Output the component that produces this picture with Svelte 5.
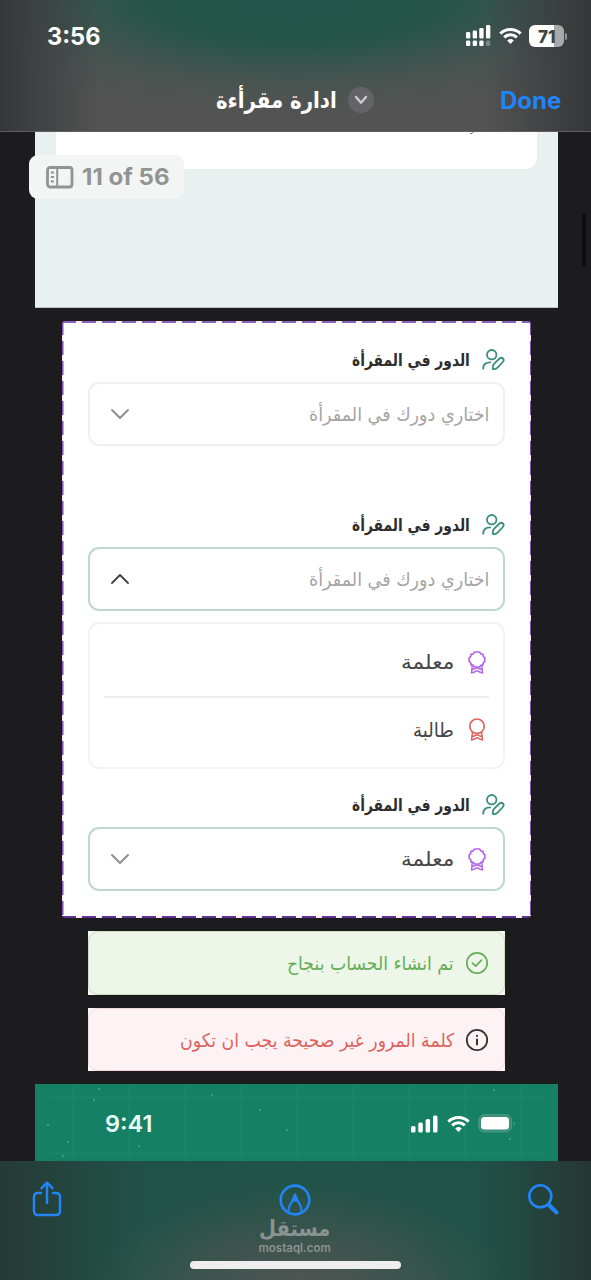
<script>
  // Scales a line of text horizontally so that it fills the given width.
  function fit(node, width) {
    const natural = node.offsetWidth;
    if (natural) node.style.transform = `scaleX(${width / natural})`;
  }
  const stars = [[64,5],[59,16],[177,11],[225,26],[252,46],[13,41],[33,58],[104,62],[28,72],[459,6],[475,55]];
</script>

{#snippet line(text, width, cls)}
  <span class="line {cls}" style="width:{width}px"><span use:fit={width}>{text}</span></span>
{/snippet}

{#snippet wifi(w)}
  <svg width={w} height={w * 0.76} viewBox="0 0 25 19" fill="none" stroke="#fff" stroke-width="3.3">
    <path d="M1.5 7.2a15.8 15.8 0 0 1 22 0" /><path d="M5.6 11.3a10 10 0 0 1 13.8 0" />
    <path d="M12.5 18.4l-3.6-3.7a5.4 5.4 0 0 1 7.2 0z" fill="#fff" stroke="none" />
  </svg>
{/snippet}

{#snippet label()}
  <div class="label">
    <svg width="23" height="22" viewBox="0 0 23 22" fill="none" stroke="#3c9078" stroke-width="1.8" stroke-linecap="round" stroke-linejoin="round">
      <circle cx="9.700" cy="5.700" r="4.700" />
      <path d="M1.200 19.700c0-4 2.400-6.400 7-6.400" />
      <path d="M10.800 20.200q-.5-3.600 1.400-5.500l5.300-5.200c1.100-1 2.500-.9 3.400 0s.9 2.400-.1 3.500l-5 5.300q-1.800 2-5 1.900z" />
    </svg>
    {@render line('الدور في المقرأة', 118, 'bold')}
  </div>
{/snippet}

{#snippet chevron(up)}
  <svg class="chevron" class:up width="20" height="12" viewBox="0 0 20 12" fill="none" stroke={up ? '#444' : '#8c8c8c'} stroke-width="1.9" stroke-linecap="round" stroke-linejoin="round"><path d="M2 2l8 8 8-8" /></svg>
{/snippet}

{#snippet award(color, scalloped)}
  <svg class="award" width="18" height="23" viewBox="0 0 18 23" fill="none" stroke={color} stroke-width="1.700" stroke-linejoin="round" stroke-linecap="round">
    {#if scalloped}
      <path d="M6.500 1h5l1.300 1.800 2.200.5.300 2.200 1.500 1.300v3.600l-1.500 1.300-.3 2.200-2.200.5L11.500 16h-5l-1.300-1.600-2.200-.5-.3-2.200-1.500-1.300V6.800l1.500-1.300.3-2.200 2.200-.5z" />
      <path d="M4.200 15L3.500 22l2.900-1 2.600-1.300 2.600 1.300 2.900 1-.7-7M4.500 18.500L9 16.800l4.500 1.700" stroke-width="1.500" />
    {:else}
      <circle cx="9" cy="8.200" r="7.200" />
      <path d="M4.400 14.300L3.500 22l2.900-1 2.600-1.300 2.600 1.300 2.900 1-.9-7.700M4.500 18.500L9 16.800l4.500 1.700" stroke-width="1.500" />
    {/if}
  </svg>
{/snippet}

<div class="screen">
  <header>
    <div class="status">
      <span class="time">{@render line('3:56', 53, 'latin')}</span>
      <div class="signals">
        <svg width="25" height="22" viewBox="0 0 25 22" fill="#fff">
          <rect x="0" y="7" width="4.3" height="6.5" rx="1.3" /><rect x="6.7" y="5.5" width="4.3" height="8" rx="1.3" /><rect x="13.3" y="3" width="4.3" height="10.5" rx="1.3" /><rect x="20" y="0" width="4.3" height="13.5" rx="1.3" />
          <rect x="0" y="15.5" width="4.3" height="5.5" rx="1.3" /><rect x="6.7" y="15.5" width="4.3" height="5.5" rx="1.3" /><rect x="13.3" y="15.5" width="4.3" height="5.5" rx="1.3" /><rect x="20" y="15.5" width="4.3" height="5.5" rx="1.3" opacity=".3" />
        </svg>
        {@render wifi(23)}
        <div class="battery">{@render line('71', 18, 'latin')}</div><i class="nub"></i>
      </div>
    </div>
    <div class="titlebar">
      <div class="title" dir="rtl">
        {@render line('ادارة مقرأءة', 121, 'heading')}
      </div>
      <span class="disc"><svg width="14" height="10" viewBox="0 0 14 10" fill="none" stroke="#ccc" stroke-width="2.4" stroke-linecap="round" stroke-linejoin="round"><path d="M2 2l5 5.700L12 2" /></svg></span>
      <span class="done">{@render line('Done', 61, 'latin')}</span>
    </div>
  </header>

  <main>
    <section class="previous">
      <div class="sheet"><svg width="6" height="4" viewBox="0 0 6 4" fill="none" stroke="#777"><path d="M1 1.500q2.500.5 3.500-1.500" /></svg></div>
      <div class="counter">
        <svg width="28" height="23" viewBox="0 0 28 23" fill="none" stroke="#929493" stroke-width="2.8"><rect x="1.5" y="1.5" width="24.5" height="19.5" rx="2.5" /><path d="M11.2 2v19" stroke-width="2" /><path d="M4.8 6.500h3.200M4.800 11h3.200M4.800 15.500h3.200" stroke-width="2" /></svg>
        {@render line('11 of 56', 88, 'latin')}
      </div>
    </section>

    <section class="form" dir="rtl">
      {@render label()}
      <div class="select">{@render line('اختاري دورك في المقرأة', 180, 'hint')}{@render chevron(false)}</div>
      <div class="gap"></div>
      {@render label()}
      <div class="select active">{@render line('اختاري دورك في المقرأة', 180, 'hint')}{@render chevron(true)}</div>
      <div class="options">
        <div class="option">{@render award('#b568e8', true)}{@render line('معلمة', 53, 'value')}</div>
        <div class="option">{@render award('#dc6562', false)}{@render line('طالبة', 41, 'value')}</div>
      </div>
      {@render label()}
      <div class="select active">{@render award('#b568e8', true)}{@render line('معلمة', 53, 'value')}{@render chevron(false)}</div>
    </section>

    <div class="toast success" dir="rtl"><div>
      <svg width="24" height="24" viewBox="0 0 24 24" fill="none" stroke="#66ad58" stroke-width="1.7" stroke-linecap="round" stroke-linejoin="round"><circle cx="12" cy="12" r="10.200" /><path d="M7.500 12.200l3.100 3 5.900-6" /></svg>
      {@render line('تم انشاء الحساب بنجاح', 167, '')}
    </div></div>
    <div class="toast error" dir="rtl"><div>
      <svg width="24" height="24" viewBox="0 0 24 24" fill="none" stroke="#333" stroke-width="1.8" stroke-linecap="round"><circle cx="12" cy="12" r="10.200" /><path d="M12 11.500v5M12 7.800v.2" stroke-width="2" /></svg>
      {@render line('كلمة المرور غير صحيحة يجب ان تكون', 274, '')}
    </div></div>

    <section class="next">
      <svg class="pattern" width="523" height="77" fill="none" stroke="#2b8b71" stroke-width="1"><path d="M38.500 0v77M94.500 0v77M150.500 0v77M206.500 0v77M262.500 0v77M318.500 0v77M374.500 0v77M430.500 0v77M486.500 0v77M14 13.500h496M14 69.500h496" opacity=".5" />{#each stars as [x, y]}<circle cx={x} cy={y} r="1" fill="#56a58c" stroke="none" />{/each}</svg>
      <span class="clock">{@render line('9:41', 47, 'latin')}</span>
      <div class="next-signals">
        <svg width="28" height="18" fill="#fff"><rect x="0" y="11" width="4.500" height="6.500" rx="1.500" /><rect x="7.300" y="7.500" width="4.500" height="10" rx="1.500" /><rect x="14.600" y="4" width="4.500" height="13.500" rx="1.500" /><rect x="22" y="0.500" width="4.500" height="17" rx="1.500" /></svg>
        {@render wifi(23)}
        <svg width="39" height="19" viewBox="0 0 39 19"><rect x=".8" y=".8" width="32.500" height="17" rx="5" fill="#398f78" stroke="#4f9d87" stroke-width="1" /><rect x="3" y="3" width="28" height="12.500" rx="3.500" fill="#fff" /><path d="M35.500 7v5q3-2.500 0-5" fill="#4d9d87" /></svg>
      </div>
    </section>
    <i class="scroll"></i>
  </main>

  <footer>
    <svg width="30" height="38" viewBox="0 0 30 38" fill="none" stroke="#2384f5" stroke-width="2.500" stroke-linecap="round" stroke-linejoin="round"><path d="M9 13H6.200Q2 13 2 17v14q0 4 4.200 4h17.600q4.200 0 4.200-4V17q0-4-4.200-4H21M15 23V3M9.500 8.200L15 2.700l5.500 5.500" /></svg>
    <div class="center">
      <svg width="32" height="32" viewBox="0 0 32 32" fill="none" stroke="#2384f5" stroke-width="2.700" stroke-linejoin="round"><circle cx="16" cy="16" r="14.300" /><path d="M9.300 28.500q.5-7 3.400-10.500L16 10.500l3.300 7.500q2.900 3.500 3.400 10.500" stroke-width="2" /><path d="M11.900 19L16 9l4.100 10q-4.100-3-8.200 0z" fill="#2384f5" stroke="none" /></svg>
      <div class="mark" dir="rtl">{@render line('مستقل', 71, '')}</div>
      <div class="site">{@render line('mostaql.com', 72, 'latin')}</div>
    </div>
    <svg width="32" height="32" viewBox="0 0 32 32" fill="none" stroke="#2384f5" stroke-linecap="round"><circle cx="13.300" cy="13.300" r="11" stroke-width="2.600" /><path d="M22 22l7.500 7.500" stroke-width="4" /></svg>
    <i class="home"></i>
  </footer>
</div>

<style>
  :global(body) { margin: 0; background: #1c1c1e; }
  .screen { width: 591px; height: 1280px; display: flex; flex-direction: column; overflow: hidden; background: #1c1c1e; font-family: "DejaVu Sans", sans-serif; }
  .screen *, .screen { box-sizing: border-box; }
  svg { display: block; flex: none; }
  .line { display: block; white-space: nowrap; flex: none; }
  .line > span { display: inline-block; transform-origin: left center; }
  [dir=rtl] .line > span { transform-origin: right center; }
  .latin { font-family: Inter, sans-serif; }

  header { height: 132px; border-bottom: 1px solid #5e5e5e; background: linear-gradient(90deg, #353638 0, #38393bb0 6%, #0000 17%, #0000 82%, #37383ab0 94%, #353638 100%), radial-gradient(ellipse 370px 112px at 50% 0, #22564a 0, #245548 38%, #42554fa0 74%, #53535300 100%), #535353; }
  .status { height: 72px; display: flex; justify-content: space-between; padding: 0 24px 0 47px; align-items: center; }
  .time { color: #fff; font-size: 24px; font-weight: 700; }
  .signals { display: flex; align-items: center; }
  .signals svg:first-child { margin-right: 8px; }
  .battery { margin-left: 7px; width: 35px; height: 22px; border-radius: 6px; background: linear-gradient(90deg, #fff 72%, #aaa 72%); display: flex; align-items: center; justify-content: center; font-size: 18px; font-weight: 800; color: #3d4643; }
  .nub { width: 2px; height: 7px; margin-left: 1px; border-radius: 0 3px 3px 0; background: #999; }
  .titlebar { height: 56px; display: flex; align-items: center; padding: 0 30px 0 216px; }
  .title { color: #fff; font-size: 23px; font-weight: 700; line-height: 30px; }
  .disc { width: 26px; height: 26px; border-radius: 50%; background: #646468; display: grid; place-items: center; margin-left: 11px; }
  .done { margin-left: auto; color: #2384f5; font-size: 24px; font-weight: 700; }

  main { height: 1029px; position: relative; display: flex; flex-direction: column; align-items: center; padding-left: 2px; }
  .previous { width: 523px; height: 176px; flex: none; position: relative; background: #e8f1f0; border-bottom: 1px solid #bfc5c4; }
  .sheet { margin-left: 21px; width: 481px; height: 37px; background: #fff; border-radius: 0 0 12px 12px; display: flex; justify-content: flex-end; padding-right: 62px; }
  .counter { position: absolute; left: -6px; top: 23px; width: 155px; height: 44px; padding-left: 17px; display: flex; align-items: center; gap: 8px; border-radius: 9px; background: #f3f5f5; color: #929493; font-size: 23px; font-weight: 700; }

  .form { width: 469px; height: 597px; flex: none; margin-top: 13px; padding: 24px 26px 0; border-radius: 3px; background:
    repeating-linear-gradient(90deg, #8d62bb 0 14px, #f6effb 14px 20px) top / 100% 2px no-repeat,
    repeating-linear-gradient(90deg, #5f3496 0 14px, #f6effb 14px 20px) bottom / 100% 2px no-repeat,
    repeating-linear-gradient(#8350b5 0 14px, #f6effb 14px 20px) left / 1.5px 100% no-repeat,
    repeating-linear-gradient(#8350b5 0 14px, #f6effb 14px 20px) right / 1.5px 100% no-repeat, #fff; }
  .label { height: 29px; display: flex; align-items: center; gap: 12px; }
  .bold { font-size: 17px; font-weight: 700; color: #2e2e2e; }
  .label + .select { margin-top: 8px; }
  .select { height: 64px; border: 2px solid #f0f0f0; border-radius: 11px; display: flex; align-items: center; padding: 0 14px 0 20px; }
  .active { border-color: #bfd8cf; }
  .hint { color: #a5a5a5; font-size: 19px; }
  .value { color: #454545; font-size: 20px; }
  .chevron { margin-right: auto; }
  .up { transform: rotate(180deg); }
  .gap { height: 64px; }
  .award { margin-left: 14px; margin-right: 3px; }
  .options { height: 147px; margin: 11px 0 21px; border: 2px solid #f3f3f3; border-radius: 11px; padding: 5px 14px; display: flex; flex-direction: column; }
  .option { height: 66px; display: flex; align-items: center; }
  .option:first-child { height: 71px; border-bottom: 2px solid #eee; }

  .toast { width: 417px; height: 64px; flex: none; margin-top: 13px; background: #fff; }
  .toast > div { height: 100%; border: 1px solid; border-radius: 10px; display: flex; align-items: center; gap: 11px; padding: 0 15px; font-size: 19px; }
  .success { background: #f3f9f0; }
  .success > div { background: #edf6e9; border-color: #c9ddc4; color: #66ad58; }
  .error { height: 63px; background: #fff8f8; }
  .error > div { background: #fdf3f4; border-color: #f3d6d8; color: #dc6562; }

  .next { position: relative; width: 523px; height: 77px; flex: none; margin-top: 13px; background: #168064; display: flex; align-items: center; justify-content: space-between; padding: 2px 41px 0 70px; }
  .pattern { position: absolute; inset: 0; }
  .clock { color: #e8fff8; font-size: 23px; font-weight: 600; position: relative; }
  .next-signals { display: flex; align-items: center; gap: 8px; position: relative; }
  .scroll { position: absolute; right: 5px; top: 82px; width: 4px; height: 52px; border-radius: 3px; background: #0d0d0e; }

  footer { position: relative; height: 119px; display: flex; justify-content: space-between; align-items: flex-start; padding: 19px 32px 0; background: radial-gradient(ellipse 210px 110px at 51% 110%, #525653 0, #465450cc 45%, #21524700 100%), linear-gradient(90deg, #263a35 0, #215247 24%, #205347 80%, #253b36 97%, #263532 100%); }
  footer > svg:last-of-type { margin-top: 3px; }
  .center { width: 73px; display: flex; flex-direction: column; align-items: center; padding-top: 4px; }
  .mark { height: 25px; line-height: 25px; color: #89938f; font-size: 22px; font-weight: 700; }
  .site { height: 14px; line-height: 14px; color: #89938f; font-size: 11.5px; font-weight: 600; }
  .home { position: absolute; left: 190px; top: 100px; width: 211px; height: 8px; border-radius: 4px; background: #eee; }
</style>
